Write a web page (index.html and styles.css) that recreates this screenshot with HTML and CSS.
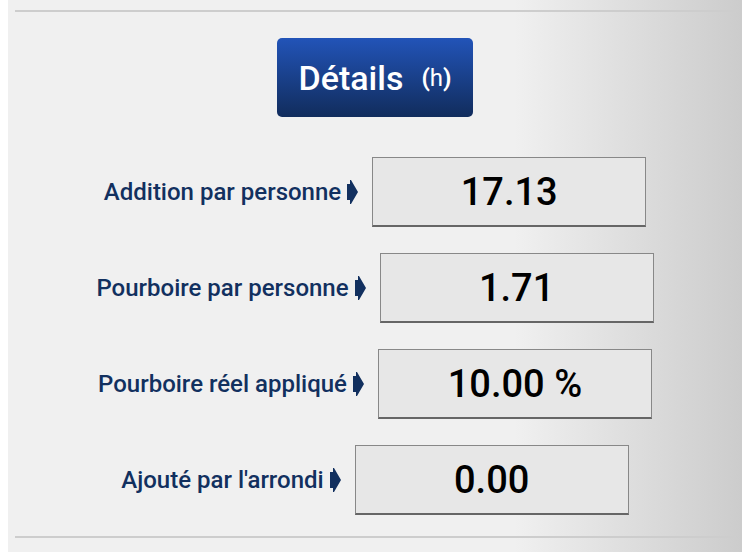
FILE: index.html
```html
<!DOCTYPE html>
<html lang="fr">
<head>
    <meta charset="UTF-8">
    <meta name="viewport" content="width=device-width, initial-scale=1.0">
    <title>Pourboire</title>
    <link rel="stylesheet" href="styles.css">
</head>
<body>

<main class="panel">
    <hr>
    <button type="button" class="details-button" accesskey="h">Détails <small>(<span>h</span>)</small></button>

    <form class="results">
        <div class="row">
            <label for="bill">Addition par personne
                <svg class="arrow" viewBox="0 0 11 24"><path d="M0 4H3V0H4L11 12L4 24H3V20H0Z"/></svg>
            </label>
            <input type="text" id="bill" value="17.13" readonly>
        </div>
        <div class="row">
            <label for="tip">Pourboire par personne
                <svg class="arrow" viewBox="0 0 11 24"><path d="M0 4H3V0H4L11 12L4 24H3V20H0Z"/></svg>
            </label>
            <input type="text" id="tip" value="1.71" readonly>
        </div>
        <div class="row">
            <label for="rate">Pourboire réel appliqué
                <svg class="arrow" viewBox="0 0 11 24"><path d="M0 4H3V0H4L11 12L4 24H3V20H0Z"/></svg>
            </label>
            <input type="text" id="rate" value="10.00 %" readonly>
        </div>
        <div class="row">
            <label for="rounding">Ajouté par l'arrondi
                <svg class="arrow" viewBox="0 0 11 24"><path d="M0 4H3V0H4L11 12L4 24H3V20H0Z"/></svg>
            </label>
            <input type="text" id="rounding" value="0.00" readonly>
        </div>
    </form>
    <hr>
</main>

</body>
</html>
```
FILE: styles.css
```css
body {
    margin: 0;
    padding: 0 6px 0 8px;
    background-color: #fff;
    font-family: Roboto, "Liberation Sans", sans-serif;
}
.panel {
    box-sizing: border-box;
    min-height: 100vh;
    padding: 10px 7px 14px;
    display: flex;
    flex-direction: column;
    align-items: center;
    background: linear-gradient(to right, #f0f0f0 69%, #cccccc);
}
hr {
    width: 100%;
    height: 2px;
    margin: 0;
    border: none;
    background-color: #cdcdcd;
}
.details-button {
    height: 79px;
    margin: 26px 0 40px;
    padding: 0 22px;
    display: flex;
    align-items: center;
    gap: 18px;
    border: none;
    border-radius: 5px;
    background: linear-gradient(#2254b8, #112c5c);
    color: #fff;
    font-family: inherit;
    font-size: 34px;
    font-weight: 500;
    cursor: pointer;
}
.details-button small {
    font-size: 24px;
    font-weight: 700;
}
.details-button span {
    font-weight: 400;
}
.results {
    margin-bottom: 21px;
    display: flex;
    flex-direction: column;
    align-items: center;
    gap: 26px;
}
.row {
    display: flex;
    align-items: center;
    gap: 14px;
}
label {
    display: flex;
    align-items: center;
    gap: 6px;
    color: #12305f;
    font-size: 24px;
    font-weight: 500;
}
.arrow {
    width: 11px;
    height: 24px;
    fill: #12305f;
}
input {
    box-sizing: border-box;
    width: 274px;
    height: 70px;
    padding: 0;
    border: 1px solid #888;
    border-bottom: 2px solid #666;
    background-color: #e7e7e7;
    color: #000;
    font-family: inherit;
    font-size: 38px;
    font-weight: 500;
    text-align: center;
}
```
